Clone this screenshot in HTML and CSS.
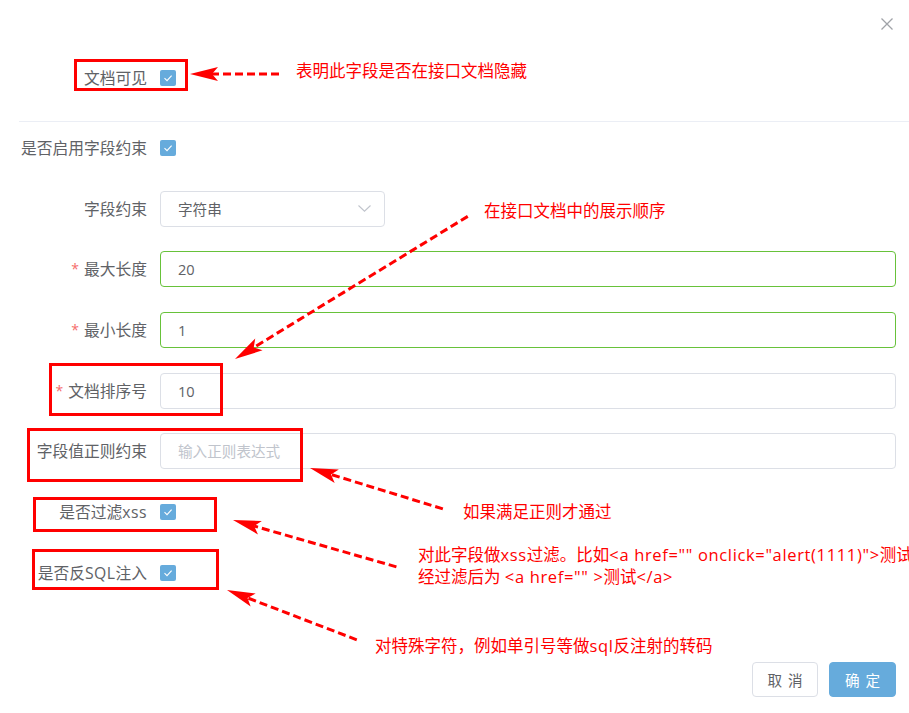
FILE: index.html
```html
<!DOCTYPE html>
<html lang="zh-CN">
<head>
<meta charset="utf-8">
<title>字段设置</title>
<link rel="stylesheet" href="styles.css">
</head>
<body>
<div class="dialog">
  <div class="dialog-header">
    <button class="close" aria-label="关闭">
      <svg width="12" height="12" viewBox="0 0 12 12"><path d="M0.5 0.5L11.5 11.5M11.5 0.5L0.5 11.5" stroke="#a0a3a8" stroke-width="1.3" fill="none"/></svg>
    </button>
  </div>

  <div class="dialog-body">
    <div class="form-item">
      <label class="label">文档可见</label>
      <div class="control"><span class="checkbox"><svg width="16" height="16" viewBox="0 0 16 16"><path d="M4.5 8.2L7 10.6L11.6 5.6" stroke="#fff" stroke-width="1.1" fill="none"/></svg></span></div>
    </div>

    <div class="divider"></div>

    <div class="form-group">
      <div class="form-item">
        <label class="label">是否启用字段约束</label>
        <div class="control"><span class="checkbox"><svg width="16" height="16" viewBox="0 0 16 16"><path d="M4.5 8.2L7 10.6L11.6 5.6" stroke="#fff" stroke-width="1.1" fill="none"/></svg></span></div>
      </div>

      <div class="form-item">
        <label class="label">字段约束</label>
        <div class="control">
          <div class="select">
            <span class="select-value">字符串</span>
            <svg class="chevron" width="13" height="7" viewBox="0 0 13 7"><path d="M0.5 0.5L6.5 6.2L12.5 0.5" stroke="#c0c4cc" stroke-width="1.1" fill="none"/></svg>
          </div>
        </div>
      </div>

      <div class="form-item">
        <label class="label"><span class="req">*</span>最大长度</label>
        <div class="control"><div class="input valid">20</div></div>
      </div>

      <div class="form-item">
        <label class="label"><span class="req">*</span>最小长度</label>
        <div class="control"><div class="input valid">1</div></div>
      </div>

      <div class="form-item">
        <label class="label"><span class="req">*</span>文档排序号</label>
        <div class="control"><div class="input">10</div></div>
      </div>

      <div class="form-item">
        <label class="label">字段值正则约束</label>
        <div class="control"><div class="input placeholder">输入正则表达式</div></div>
      </div>

      <div class="form-item">
        <label class="label">是否过滤<span class="latin">xss</span></label>
        <div class="control"><span class="checkbox"><svg width="16" height="16" viewBox="0 0 16 16"><path d="M4.5 8.2L7 10.6L11.6 5.6" stroke="#fff" stroke-width="1.1" fill="none"/></svg></span></div>
      </div>

      <div class="form-item">
        <label class="label">是否反<span class="latin">SQL</span>注入</label>
        <div class="control"><span class="checkbox"><svg width="16" height="16" viewBox="0 0 16 16"><path d="M4.5 8.2L7 10.6L11.6 5.6" stroke="#fff" stroke-width="1.1" fill="none"/></svg></span></div>
      </div>
    </div>
  </div>

  <div class="dialog-footer">
    <button class="btn">取 消</button>
    <button class="btn btn-primary">确 定</button>
  </div>

  <div class="annotations">
    <svg class="marks" width="909" height="713" viewBox="0 0 909 713">
      <g fill="none" stroke="#ff0000" stroke-width="3">
        <rect x="75.5" y="60.5" width="111" height="29"/>
        <rect x="50.5" y="364.5" width="171" height="50"/>
        <rect x="28.5" y="429.5" width="273" height="51"/>
        <rect x="34.5" y="498.5" width="181" height="32"/>
        <rect x="33.5" y="550.5" width="184" height="38"/>
      </g>
      <g fill="#ff0000" stroke="#ff0000">
        <g transform="translate(190 74) rotate(0)">
          <line x1="89" y1="0" x2="22" y2="0" stroke-width="3" stroke-dasharray="8 4"/>
          <polygon points="0,0 28,-7 22,0 28,7" stroke="none"/>
        </g>
        <g transform="translate(235 359) rotate(-31.5)">
          <line x1="273" y1="0" x2="22" y2="0" stroke-width="3" stroke-dasharray="8 4"/>
          <polygon points="0,0 28,-7 22,0 28,7" stroke="none"/>
        </g>
        <g transform="translate(310 468) rotate(17.1)">
          <line x1="139" y1="0" x2="22" y2="0" stroke-width="3" stroke-dasharray="8 4"/>
          <polygon points="0,0 28,-7 22,0 28,7" stroke="none"/>
        </g>
        <g transform="translate(233 520) rotate(16)">
          <line x1="170" y1="0" x2="22" y2="0" stroke-width="3" stroke-dasharray="8 4"/>
          <polygon points="0,0 28,-7 22,0 28,7" stroke="none"/>
        </g>
        <g transform="translate(227 590) rotate(21)">
          <line x1="139" y1="0" x2="22" y2="0" stroke-width="3" stroke-dasharray="8 4"/>
          <polygon points="0,0 28,-7 22,0 28,7" stroke="none"/>
        </g>
      </g>
    </svg>
    <p class="note note-visible">表明此字段是否在接口文档隐藏</p>
    <p class="note note-order">在接口文档中的展示顺序</p>
    <p class="note note-regex">如果满足正则才通过</p>
    <p class="note note-xss">对此字段做<span class="code">xss</span>过滤。比如<span class="code">&lt;a href="" onclick="alert(1111)"&gt;</span>测试<br>经过滤后为 <span class="code">&lt;a href="" &gt;</span>测试<span class="code">&lt;/a&gt;</span></p>
    <p class="note note-sql">对特殊字符，例如单引号等做<span class="code">sql</span>反注射的转码</p>
  </div>
</div>
</body>
</html>
```
FILE: styles.css
```css
* {
  box-sizing: border-box;
}

html, body {
  margin: 0;
  padding: 0;
  background: #ffffff;
}

body {
  font-family: "Open Sans", "Noto Sans CJK SC", sans-serif;
  color: #606266;
}

.dialog {
  position: relative;
  width: 909px;
  height: 713px;
  overflow: hidden;
  background: #ffffff;
}

.dialog-header {
  display: flex;
  justify-content: flex-end;
  align-items: flex-start;
  height: 60px;
  padding: 18px 16px 0 0;
}

.close {
  display: block;
  width: 12px;
  height: 12px;
  padding: 0;
  margin: 0;
  border: none;
  background: none;
  line-height: 0;
}

.dialog-body {
  display: flex;
  flex-direction: column;
}

.divider {
  height: 1px;
  margin: 25px 0 8px 19px;
  background: #ebeef5;
}

.form-group {
  display: flex;
  flex-direction: column;
  gap: 24.7px;
}

.form-item {
  display: flex;
  align-items: center;
  height: 36px;
}

.label {
  width: 147px;
  flex: none;
  text-align: right;
  font-size: 15.75px;
  line-height: 36px;
  color: #606266;
  white-space: nowrap;
}

.latin {
  letter-spacing: 0.5px;
}

.req {
  color: #f56c6c;
  font-size: 14px;
  margin-right: 5px;
  vertical-align: 1px;
}

.control {
  flex: 1;
  display: flex;
  align-items: center;
  margin-left: 13px;
  margin-right: 13px;
}

.checkbox {
  display: block;
  width: 16px;
  height: 16px;
  border-radius: 2px;
  background: #66abdc;
  line-height: 0;
}

.select {
  display: flex;
  align-items: center;
  justify-content: space-between;
  width: 225px;
  height: 36px;
  padding: 0 13px 0 17px;
  border: 1px solid #dcdfe6;
  border-radius: 4px;
  font-size: 14.6px;
  color: #606266;
}

.chevron {
  display: block;
}

.input {
  flex: 1;
  height: 36px;
  padding: 0 17px;
  border: 1px solid #dcdfe6;
  border-radius: 4px;
  font-size: 14.6px;
  line-height: 34px;
  color: #606266;
}

.input.valid {
  border-color: #67c23a;
}

.input.placeholder {
  color: #c0c4cc;
}

.dialog-footer {
  display: flex;
  justify-content: flex-end;
  gap: 11px;
  margin-top: 70.8px;
  padding-right: 13px;
}

.btn {
  width: 66px;
  height: 35px;
  padding: 0;
  border: 1px solid #dcdfe6;
  border-radius: 4px;
  background: #ffffff;
  color: #606266;
  font-family: "Open Sans", "Noto Sans CJK SC", sans-serif;
  font-size: 14.6px;
  word-spacing: 2px;
}

.btn-primary {
  width: 67px;
  background: #66abdc;
  border-color: #66abdc;
  color: #ffffff;
}

.annotations {
  position: absolute;
  inset: 0;
  pointer-events: none;
}

.marks {
  position: absolute;
  left: 0;
  top: 0;
}

.note {
  position: absolute;
  margin: 0;
  font-size: 16.5px;
  line-height: 22px;
  color: #ff0000;
  white-space: nowrap;
}

.note .code {
  letter-spacing: 0.65px;
}

.note-visible { left: 296px; top: 60px; }
.note-order { left: 484px; top: 200px; }
.note-regex { left: 463px; top: 501px; }
.note-xss { left: 418px; top: 544px; }
.note-sql { left: 375px; top: 635px; }
```
